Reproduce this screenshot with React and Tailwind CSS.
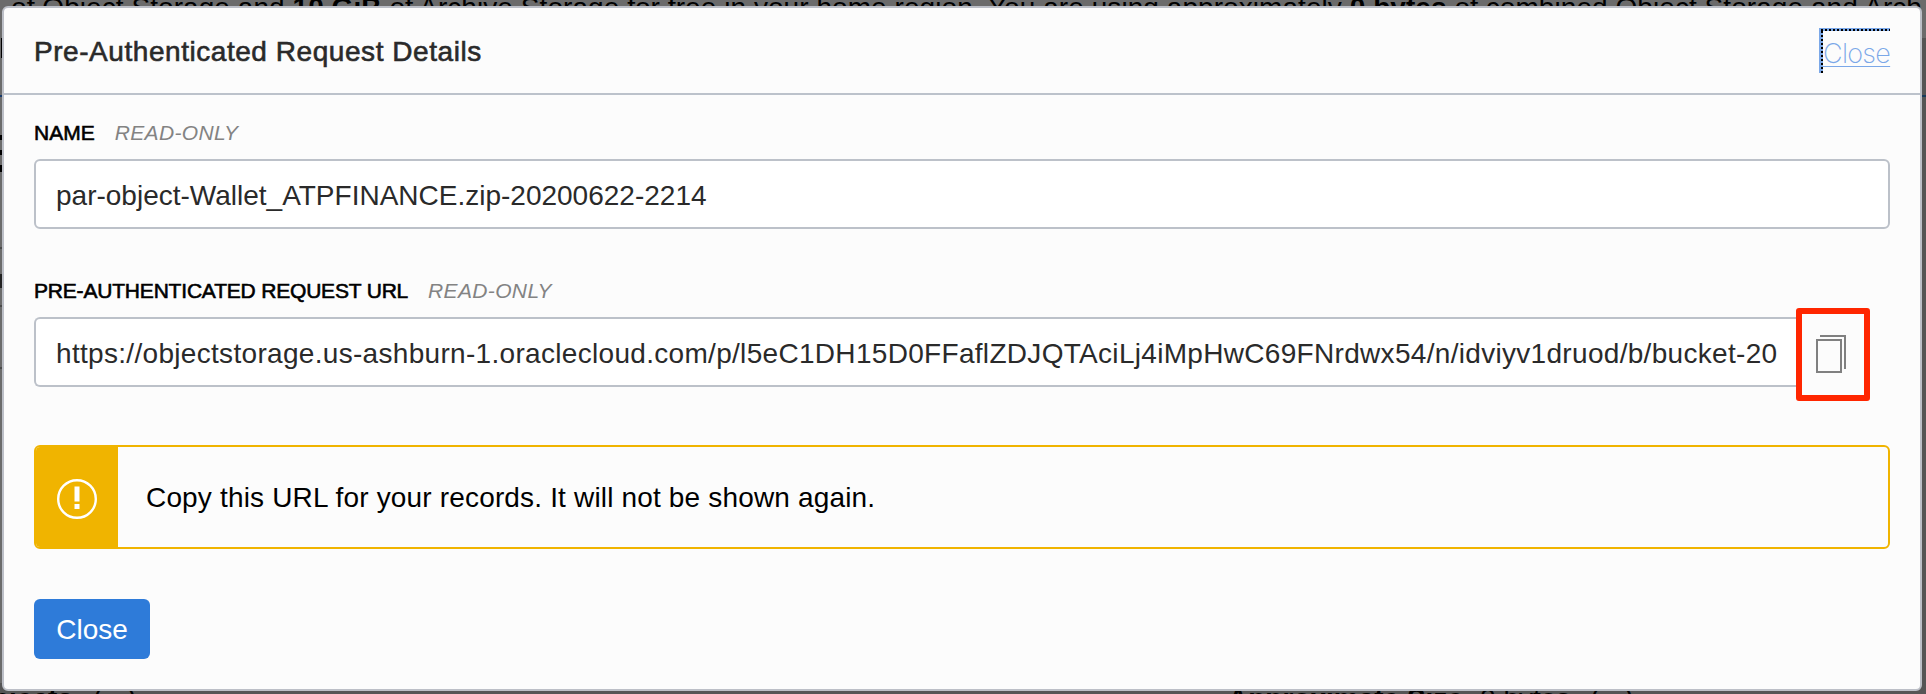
import React from "react";

const URL_TEXT =
  "https://objectstorage.us-ashburn-1.oraclecloud.com/p/l5eC1DH15D0FFaflZDJQTAciLj4iMpHwC69FNrdwx54/n/idviyv1druod/b/bucket-20";

function FieldLabel({ children, className }) {
  return (
    <div className="flex h-7 items-center gap-[20px] text-[21px] leading-7">
      <span className={"text-black [-webkit-text-stroke:0.6px_#000] " + className}>{children}</span>
      <span className="tracking-[0.35px] italic text-[#838383]">READ-ONLY</span>
    </div>
  );
}

function Backdrop() {
  return (
    <div className="absolute inset-0 flex flex-col justify-between overflow-hidden bg-[#6b6b6b] text-[28px] leading-8 whitespace-nowrap text-black">
      <div className="-mt-[8px] pl-[11px] tracking-[0.06px]">
        of Object Storage and <b>10 GiB</b> of Archive Storage for free in your home region. You are using approximately <b>0 bytes</b> of combined Object Storage and Arch
      </div>
      <div className="mt-[14px] flex grow justify-between">
        <div className="flex w-[2px] flex-col">
          <div className="h-5 w-px self-end bg-black"></div>
          <div className="mt-[37px] h-[2px] bg-[#173a6b]"></div>
          <div className="mt-[38px] h-[5px] bg-black"></div>
          <div className="mt-[10px] h-[5px] bg-black"></div>
          <div className="mt-[10px] h-[7px] bg-black"></div>
          <div className="mt-[75px] h-[2px] bg-[#4a4a4a]"></div>
          <div className="mt-[25px] h-[14px] bg-[#222]"></div>
          <div className="mt-[17px] h-[2px] bg-[#4a4a4a]"></div>
          <div className="mt-[60px] h-[2px] bg-[#4a4a4a]"></div>
        </div>
        <div className="w-1 bg-[#555] pt-[57px]"><div className="h-[2px] bg-[#173a5c]"></div></div>
      </div>
      <div className="-mb-[21px] flex bg-[#555]">
        <b className="w-[1228px]"><span className="-ml-[8px]">bjects</span><span className="ml-[20px] font-normal">( - )</span></b>
        <span><b>Approximate Size:</b> 0 bytes<span className="ml-[20px]">( - )</span></span>
      </div>
    </div>
  );
}

export default function App() {
  return (
    <div className="relative h-[694px] w-[1926px] overflow-hidden font-['Liberation_Sans',Arial,sans-serif]">
      <Backdrop />
      <div className="relative mt-[6px] ml-[2px] h-[685px] w-[1920px] rounded-[6px] border-2 border-[#bcbfc7] bg-[#fcfcfc]">
        <header className="flex h-[87px] items-start justify-between border-b-2 border-[#bcc2cb] pr-[30px] pl-[30px]">
          <h1 className="mt-[28px] text-[28px] leading-8 tracking-[0.55px] text-[#2a2a2a] [-webkit-text-stroke:0.6px_#2a2a2a]">Pre-Authenticated Request Details</h1>
          <div className="mt-[20px] border-t border-l-2 border-[#7ba8e8] bg-[#7ba8e8]">
            <div className="w-[69px] bg-[linear-gradient(90deg,#000_50%,#7ba8e8_50%)] bg-[length:4px_2px] bg-repeat-x pt-[2px]">
              <div className="flex bg-[linear-gradient(#000_50%,#7ba8e8_50%)] bg-[length:2px_4px] pl-[2px]">
                <button className="flex h-[42px] w-[67px] items-start bg-[#fcfcfc] pt-[5px] font-[Inter] text-[27px] leading-9 font-extralight tracking-[-0.7px] text-[#7ba8e8] underline decoration-1 underline-offset-[3px]">Close</button>
              </div>
            </div>
          </div>
        </header>
        <main className="flex flex-col items-start px-[30px] pt-[24px]">
          <FieldLabel className="">NAME</FieldLabel>
          <div className="mt-[12px] flex h-[70px] w-full items-center rounded-[6px] border-2 border-[#bcc1c9] bg-white pt-[3px] pl-5 text-[28px] text-[#2a2a2a]">
            <span>par-object-Wallet_ATPFINANCE.zip-20200622-2214</span>
          </div>
          <div className="mt-[48px]"><FieldLabel className="tracking-[-0.19px]">PRE-AUTHENTICATED REQUEST URL</FieldLabel></div>
          <div className="mt-[3px] flex h-[93px] w-full items-start">
            <div className="mt-[9px] flex h-[70px] w-[1762px] items-center rounded-l-[6px] border-2 border-r-0 border-[#bcc1c9] bg-white pt-[3px] pl-5 text-[28px] tracking-[0.31px] whitespace-nowrap text-[#2a2a2a]">
              <span>{URL_TEXT}</span>
            </div>
            <button className="flex h-[93px] w-[74px] items-start rounded-[3px] border-6 border-[#ff2600] bg-[#fcfcfc] pt-[21px] pl-[14px]">
              <svg width="30" height="38" viewBox="0 0 30 38" fill="none" stroke="#808080" strokeWidth="2"><path d="M1 5H25V37H1ZM4 1H29V34" /></svg>
            </button>
          </div>
          <div className="mt-[44px] flex h-[104px] w-full items-stretch overflow-hidden rounded-[6px] border-2 border-[#f0b400]">
            <div className="flex w-[82px] items-center bg-[#f0b400] pt-[4px] pl-[21px]">
              <svg width="40" height="40" viewBox="0 0 40 40" fill="none"><circle cx="20" cy="20" r="18.8" stroke="#fff" strokeWidth="2.4" /><path d="M17.5 7.5H22.5V22.5H17.5ZM17.5 25H22.5V30H17.5Z" fill="#fff" /></svg>
            </div>
            <p className="flex items-center pt-[2px] pl-[28px] text-[28px] tracking-[0.165px] text-black"><span>Copy this URL for your records. It will not be shown again.</span></p>
          </div>
          <button className="mt-[50px] flex h-[60px] w-[116px] items-center justify-center rounded-[6px] bg-[#2e7bd9] pt-[1px] text-[28px] text-white"><span>Close</span></button>
        </main>
      </div>
    </div>
  );
}
